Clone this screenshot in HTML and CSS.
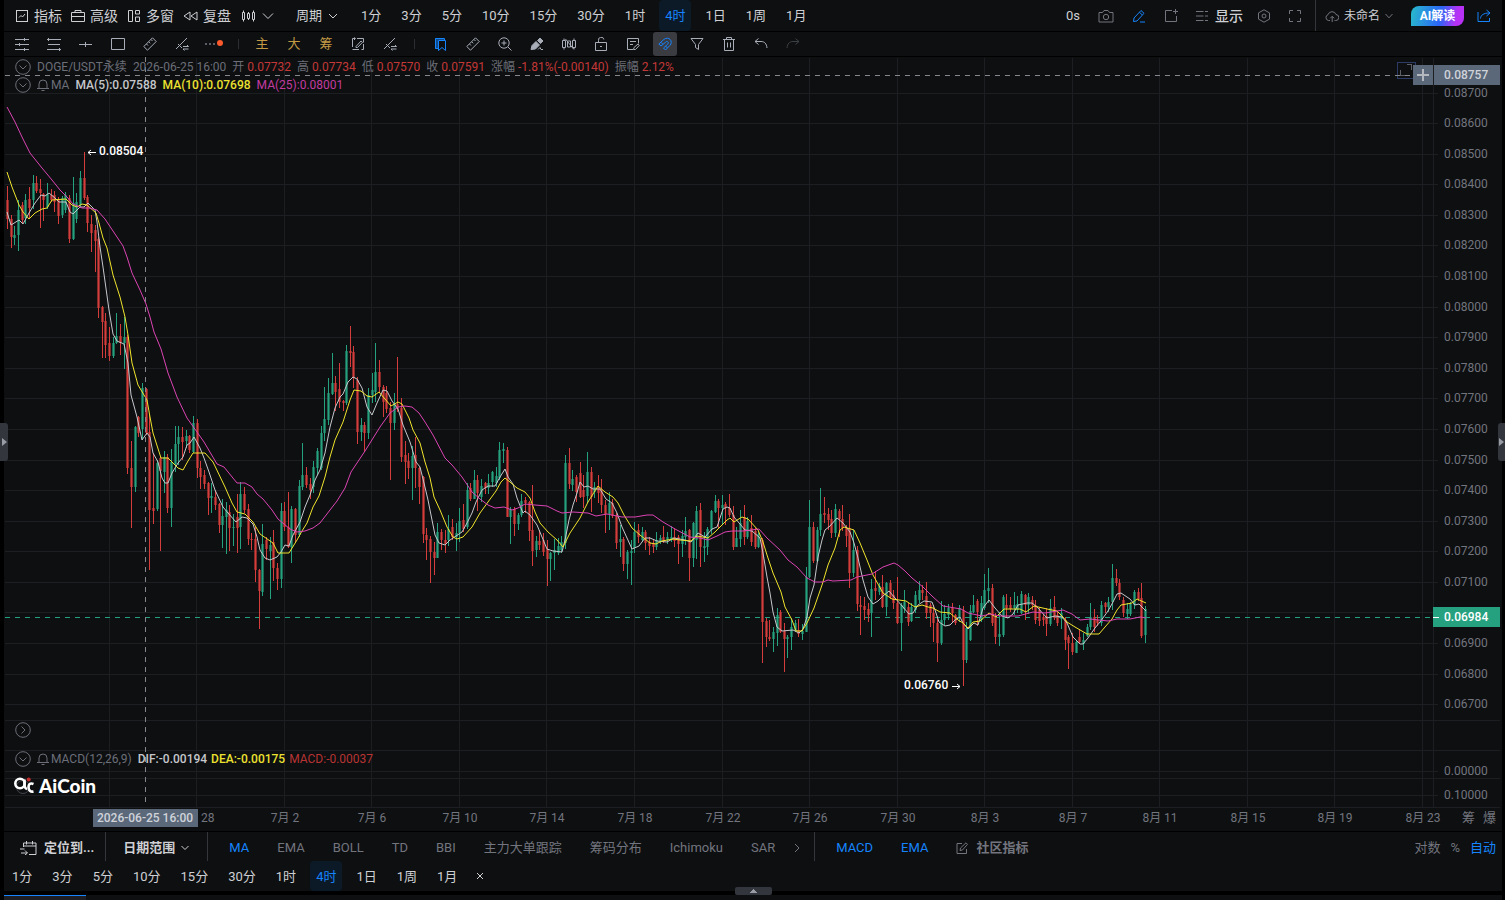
FILE: index.html
```html
<!doctype html>
<html lang="zh-CN">
  <head>
    <meta charset="utf-8">
    <title>DOGE/USDT永续</title>
    <link rel="stylesheet" href="styles.css">
  </head>
  <body>
    <div class="app">
      <header class="topbar">
        <div class="menu">
          <button class="menu-btn"><svg width="14" height="14" viewBox="0 0 14 14"><rect x="1.500" y="1.500" width="11" height="11"/><path d="M4 8.500l2-2 1.500 1.500 2.500-3"/></svg>指标</button>
          <button class="menu-btn"><svg width="14" height="14" viewBox="0 0 14 14"><path d="M.5 3.500h13v9H.5zM4 3.500v-2h6v2M.5 7.500h13"/></svg>高级</button>
          <button class="menu-btn"><svg width="14" height="14" viewBox="0 0 14 14"><path d="M1.500 1.500h4v11h-4zM8.500 1.500h4v3.500h-4zM8.500 8h4v4.500h-4z"/></svg>多窗</button>
          <button class="menu-btn"><svg width="15" height="14" viewBox="0 0 15 14"><path d="M7 3v8L1 7zM14 3v8L8 7z"/></svg>复盘</button>
        </div>
        <button class="menu-btn kind" aria-label="K线类型">
          <svg width="15" height="14" viewBox="0 0 15 14"><path d="M1.500 3.500h2v7h-2zM6.500 4.500h2v5h-2zM11.500 3.500h2v7h-2zM2.500 1.500v2M2.500 10.500v2M7.500 3v1.500M7.500 9.500V11M12.500 1.500v2M12.500 10.500v2"/></svg>
          <svg width="12" height="8" viewBox="0 0 12 8"><path d="M1 1.500l5 5 5-5"/></svg>
        </button>
        <button class="menu-btn period">周期<svg width="10" height="6" viewBox="0 0 10 6"><path d="M1 1l4 4 4-4"/></svg></button>
        <nav class="frames">
          <button>1分</button><button>3分</button><button>5分</button><button>10分</button><button>15分</button><button>30分</button><button>1时</button><button class="on">4时</button><button>1日</button><button>1周</button><button>1月</button>
        </nav>
        <div class="actions">
          <span class="timer">0s</span>
          <button aria-label="截图"><svg class="dim" width="16" height="14" viewBox="0 0 16 14"><path d="M1 3.500h3.500L6 1.500h4l1.500 2H15v9.500H1z"/><circle cx="8" cy="8" r="2.700"/></svg></button>
          <button aria-label="画图"><svg class="blue" width="14" height="14" viewBox="0 0 14 14"><path d="M1.500 12.500l.5-3.500 7-7.500L12 4.300 5 12zM7.500 3.200l2.800 2.800M8 13h5"/></svg></button>
          <button aria-label="新建"><svg class="dim" width="14" height="14" viewBox="0 0 14 14"><path d="M8 1.500H1.500v11h11V7M11.500 0v5M9 2.500h5"/></svg></button>
          <button class="show"><svg class="dim" width="12" height="12" viewBox="0 0 12 12"><path d="M0 1.500h7.500M0 6h7.500M0 10.500h7.500M9 1.500h3M9 6h3M9 10.500h3"/></svg>显示</button>
          <button aria-label="设置"><svg class="dim" width="14" height="14" viewBox="0 0 14 14"><path d="M7 .8l5.500 3.100v6.200L7 13.200l-5.500-3.100V3.900z"/><circle cx="7" cy="7" r="2"/></svg></button>
          <button aria-label="全屏"><svg class="dim" width="12" height="12" viewBox="0 0 12 12"><path d="M.5 4V.5H4M8 .5h3.500V4M11.500 8v3.500H8M4 11.500H.5V8"/></svg></button>
          <button class="layout"><svg class="dim" width="14" height="12" viewBox="0 0 14 12"><path d="M5 10.500H3.500a3 3 0 0 1-.5-5.800 4.200 4.200 0 0 1 8-.2 3 3 0 0 1-.5 6H9.500M7.200 12V6.500M5.200 8.300l2-2 2 2"/></svg>未命名<svg class="dim" width="8" height="6" viewBox="0 0 8 6"><path d="M.5 1L4 4.800 7.500 1"/></svg></button>
          <button class="ai">AI解读</button>
          <button aria-label="分享"><svg class="blue" width="14" height="13" viewBox="0 0 14 13"><path d="M1 3v9.500h11.500V9M3.500 9.500c.3-3.500 3-5.500 9-5.500M9.500 1L13 4 9.500 7"/></svg></button>
        </div>
      </header>

      <div class="tools">
        <div class="tool-group">
          <button aria-label="线段"><svg width="14" height="14" viewBox="0 0 14 14"><path d="M0 2.500h14M0 7.500h14M0 12.500h14M9.500 1v3M4.500 6v3M9.500 11v3"/></svg></button>
          <button aria-label="平行线"><svg width="14" height="14" viewBox="0 0 14 14"><path d="M0 2.500h14M1 7.500h12M0 12.500h14M1.500 1v3M12.500 11v3"/></svg></button>
          <button aria-label="水平线"><svg width="14" height="14" viewBox="0 0 14 14"><path d="M0 7.500h13M6.500 5v5"/></svg></button>
          <button aria-label="矩形"><svg width="14" height="14" viewBox="0 0 14 14"><path d="M.5 1.500h13v11H.5z"/></svg></button>
          <button aria-label="尺子"><svg width="14" height="14" viewBox="0 0 14 14"><path d="M.8 9.500L9.500.8l3.700 3.700-8.700 8.700zM3.500 7l1.500 1.500M5.700 4.800l1.500 1.500M8 2.500L9.500 4"/></svg></button>
          <button aria-label="画线"><svg width="14" height="14" viewBox="0 0 14 14"><path d="M1 12L12 1M3 7l4 4M8 9.500h5.500L12 8M13.500 12H8l1.500 1.500"/></svg></button>
          <button aria-label="更多"><svg width="20" height="14" viewBox="0 0 20 14"><path d="M1 7h2M5 7h2M9 7h2"/><circle class="dot" cx="16" cy="6" r="3"/></svg></button>
          <i class="sep"></i>
          <button class="gold">主</button>
          <button class="gold">大</button>
          <button class="gold">筹</button>
          <button aria-label="模板"><svg width="14" height="14" viewBox="0 0 14 14"><path d="M4 1.500H1.500V10M3 .5l1.500 1L3 3M6 1.500h6.500v4M12.500 7v5.500h-2M1.500 12.500H8M5 9.500L10 4l1.500 1.300-5 5.200H5z"/></svg></button>
          <button aria-label="交易画线"><svg width="14" height="14" viewBox="0 0 14 14"><path d="M1 12L12 1M3 7l4 4M8 9.500h5.500L12 8M13.500 12H8l1.500 1.500"/></svg></button>
          <i class="sep"></i>
        </div>
        <div class="tool-group">
          <button aria-label="书签"><svg class="blue" width="14" height="14" viewBox="0 0 14 14"><path class="shade" d="M1 1h9v2H4v9H1z"/><path d="M4.500 3.500h7v10l-3.500-3-3.500 3zM10.500 3V1.500h-9v10h3"/></svg></button>
          <button aria-label="测量"><svg width="14" height="14" viewBox="0 0 14 14"><path d="M.8 9.500L9.500.8l3.700 3.700-8.700 8.700zM3.500 7l1.500 1.500M5.700 4.800l1.500 1.500M8 2.500L9.500 4"/></svg></button>
          <button aria-label="放大"><svg width="14" height="14" viewBox="0 0 14 14"><circle cx="6" cy="6" r="5.200"/><path d="M10 10l3.500 3.500M3.500 6h5M6 3.500v5"/></svg></button>
          <button aria-label="画笔"><svg width="14" height="14" viewBox="0 0 14 14"><path class="solid" d="M1 12.500l1-4 4-4 3.500 3.500-4 4zM7.500 3.500L10 1l3 3-2.500 2.500z"/><path d="M8 12.500l2-2 1 2h2"/></svg></button>
          <button aria-label="隐藏K线"><svg width="14" height="14" viewBox="0 0 14 14"><path d="M.5 3.500h3v7h-3zM10.500 3.500h3v7h-3zM2 1.500v2M2 10.500v2M12 1.500v2M12 10.500v2M5.500 4v6h3V4zM3.500 2l8 10"/></svg></button>
          <button aria-label="解锁"><svg width="14" height="14" viewBox="0 0 14 14"><path d="M1.500 5.500h11v8h-11zM4.500 5.500V3.500a2.700 2.700 0 0 1 5.400-1M6 9.500h2"/></svg></button>
          <button aria-label="备注"><svg width="14" height="14" viewBox="0 0 14 14"><path d="M7 12.500H1.500v-11h11v5M4 4.500h6M4 7.500h3M7.500 12.500l.5-2 4-3.500 1.200 1.500-3.700 4z"/></svg></button>
          <button class="on" aria-label="磁铁"><svg class="blue" width="14" height="14" viewBox="0 0 14 14"><path d="M.8 7l5-4.500c5-4 10 2 6 6L7.500 13 5.500 11l4.300-4c1.500-1.500-.5-3.500-2-2L3 9zM2.800 5.200l2 2M7.500 9l2 2"/></svg></button>
          <button aria-label="筛选"><svg width="14" height="14" viewBox="0 0 14 14"><path d="M1 1.500h12L8.500 7.500v5l-3-2v-3z"/></svg></button>
          <button aria-label="删除"><svg width="14" height="14" viewBox="0 0 14 14"><path d="M1 2.500h12M4.500 2.500v-2h5v2M2.500 2.500v11h9v-11M5.500 5.500v5M8.500 5.500v5"/></svg></button>
          <button aria-label="撤销"><svg width="14" height="14" viewBox="0 0 14 14"><path d="M4.500 1.500l-3.500 3 3.500 3M1 4.500h6c3.500 0 5.500 2 6 6.500"/></svg></button>
          <button class="off" aria-label="重做"><svg width="14" height="14" viewBox="0 0 14 14"><path d="M9.500 1.500l3.500 3-3.500 3M13 4.500H7c-3.500 0-5.500 2-6 6.500"/></svg></button>
        </div>
      </div>

      <main class="chart">
        <svg id="plot" class="plot"></svg>
        <div class="legend legend-top">
          <div class="line">
            <svg class="fold" width="16" height="16" viewBox="0 0 16 16"><circle cx="8" cy="8" r="7.300"/><path d="M4.500 6.500L8 10l3.500-3.500"/></svg>
            <span class="pair">DOGE/USDT永续</span>
            <span class="pair">2026-06-25 16:00</span>
            <span class="pair">开<b>0.07732</b></span>
            <span class="pair">高<b>0.07734</b></span>
            <span class="pair">低<b>0.07570</b></span>
            <span class="pair">收<b>0.07591</b></span>
            <span class="pair">涨幅<b>-1.81%(-0.00140)</b></span>
            <span class="pair">振幅<b>2.12%</b></span>
          </div>
          <div class="line">
            <svg class="fold" width="16" height="16" viewBox="0 0 16 16"><circle cx="8" cy="8" r="7.300"/><path d="M4.500 6.500L8 10l3.500-3.500"/></svg>
            <span class="name"><svg width="12" height="12" viewBox="0 0 12 12"><path d="M0 9.500h12M2 9.500V5a4 4 0 0 1 8 0v4.500M4.500 11.500h3"/></svg>MA</span>
            <span class="white">MA(5):0.07588</span>
            <span class="yellow">MA(10):0.07698</span>
            <span class="pink">MA(25):0.08001</span>
          </div>
        </div>
        <div class="legend legend-macd">
          <div class="line">
            <svg class="fold" width="16" height="16" viewBox="0 0 16 16"><circle cx="8" cy="8" r="7.300"/><path d="M6.500 4.500L10 8l-3.500 3.500"/></svg>
          </div>
          <div class="line">
            <svg class="fold" width="16" height="16" viewBox="0 0 16 16"><circle cx="8" cy="8" r="7.300"/><path d="M4.500 6.500L8 10l3.500-3.500"/></svg>
            <span class="name"><svg width="12" height="12" viewBox="0 0 12 12"><path d="M0 9.500h12M2 9.500V5a4 4 0 0 1 8 0v4.500M4.500 11.500h3"/></svg>MACD(12,26,9)</span>
            <span class="values">
              <span class="white">DIF:-0.00194</span>
              <span class="yellow">DEA:-0.00175</span>
              <span class="red">MACD:-0.00037</span>
            </span>
          </div>
          <div class="brand">
            <svg width="20" height="18" viewBox="0 0 20 18"><circle class="ring" cx="9" cy="10" r="6.500"/><path class="thick" d="M10.500 2.500v4.500q0 4.500 2.500 5"/><circle class="thick" cx="6" cy="6.500" r="4.700"/><path class="thick" d="M19.500 7c-3.500-1.500-5 .5-5 3.200 0 3 2 5 5 4.300"/><circle class="spot" cx="14.700" cy="2.500" r="2"/></svg>
            AiCoin
          </div>
        </div>
        <div class="extra"><button>筹</button><button>爆</button></div>
      </main>

      <div class="indicators">
        <button class="strong locate"><svg width="17" height="14" viewBox="0 0 17 14"><path d="M3.500 6V2h12.500v11.500H9M3.500 5h12.500M6.500 0v3.500M12.500 0v3.500M0 8h4.500M1 12h6M5 9.500L7.500 12 5 14"/></svg>定位到...</button>
        <button class="strong range">日期范围<svg width="8" height="6" viewBox="0 0 8 6"><path d="M.5 1L4 4.500 7.500 1"/></svg></button>
        <div class="tabs">
          <button class="on">MA</button><button>EMA</button><button>BOLL</button><button>TD</button><button>BBI</button><button>主力大单跟踪</button><button>筹码分布</button><button>Ichimoku</button><button>SAR</button>
        </div>
        <button class="next" aria-label="更多指标"><svg width="6" height="10" viewBox="0 0 6 10"><path d="M1 1l4 4-4 4"/></svg></button>
        <div class="tabs sub">
          <button class="on">MACD</button><button class="on">EMA</button>
          <button class="community"><svg width="12" height="12" viewBox="0 0 12 12"><path d="M6 1.500H1v10h9.500V7M4 8.500l.5-2.500L10 .8 11.500 2.300 6.500 8z"/></svg>社区指标</button>
        </div>
        <div class="scale"><button>对数</button><button>%</button><button class="on">自动</button></div>
      </div>
      <div class="bottom">
        <nav class="frames">
          <button>1分</button><button>3分</button><button>5分</button><button>10分</button><button>15分</button><button>30分</button><button>1时</button><button class="on">4时</button><button>1日</button><button>1周</button><button>1月</button>
        </nav>
        <button class="close" aria-label="关闭"><svg width="8" height="8" viewBox="0 0 8 8"><path d="M1 1l6 6M7 1L1 7"/></svg></button>
      </div>
      <footer class="dock"><div class="dock-tab"></div></footer>
    </div>
    <button class="handle left" aria-label="展开左侧"><svg width="5" height="8" viewBox="0 0 5 8"><path d="M0 0l5 4-5 4z"/></svg></button>
    <button class="handle right" aria-label="收起右侧"><svg width="5" height="8" viewBox="0 0 5 8"><path d="M0 0l5 4-5 4z"/></svg></button>
    <button class="handle down" aria-label="展开底部"><svg width="8" height="4" viewBox="0 0 8 4"><path d="M0 4l4-4 4 4z"/></svg></button>
    <script src="chart.js"></script>
  </body>
</html>
```
FILE: styles.css
```css
* { box-sizing: border-box; }
html, body { height: 100%; }
body {
  margin: 0;
  background: #000;
  color: #cfd0d4;
  font: 13px/18px Roboto, "Noto Sans CJK SC", sans-serif;
  overflow: hidden;
}
button {
  display: flex;
  align-items: center;
  justify-content: center;
  padding: 0;
  border: 0;
  background: none;
  color: inherit;
  font: inherit;
  white-space: nowrap;
  cursor: pointer;
}
svg { display: block; flex: none; fill: none; stroke: currentColor; }
svg.dim { color: #73757e; }
svg.blue { color: #1684fc; }

.app {
  display: flex;
  flex-direction: column;
  min-height: 100%;
  margin: 0 3px 0 4px;
}
.topbar, .tools, .chart, .indicators, .bottom { background: #0d0f11; }

/* top bar */
.topbar {
  display: flex;
  align-items: center;
  height: 31px;
  padding: 0 11px;
  margin-bottom: 1px;
}
.menu { display: flex; gap: 9px; font-size: 14px; }
.menu-btn { gap: 5px; }
.kind { margin-left: 10px; gap: 6px; }
.period { margin-left: 22px; gap: 6px; }
.frames { display: flex; align-self: stretch; gap: 8px; }
.frames button { padding: 0 6px; border-radius: 4px; }
.frames .on { background: #0c1a27; color: #1684fc; }
.topbar .frames { margin-left: 17px; }
.actions {
  display: flex;
  align-items: center;
  align-self: stretch;
  gap: 18px;
  margin-left: auto;
}
.show { gap: 7px; font-size: 14px; font-weight: 500; margin-right: -4px; }
.layout {
  align-self: stretch;
  gap: 5px;
  padding-left: 9px;
  margin-left: -4px;
  border-left: 1px solid #34363c;
  font-size: 12px;
}
.ai {
  width: 53px;
  height: 20px;
  margin-right: -5px;
  border-radius: 8px 0;
  background: linear-gradient(100deg, #28bccb, #2b66f6 55%, #b832f5 85%);
  color: #fff;
  font-size: 12px;
  font-weight: 700;
}

/* drawing tools */
.tools {
  display: flex;
  gap: 11px;
  height: 24px;
  padding: 0 6px;
  margin-bottom: 1px;
}
.tool-group { display: flex; gap: 8px; color: #a9adb8; }
.tool-group button { width: 24px; border-radius: 3px; }
.tool-group .on { background: #3a3c42; }
.tool-group .off { opacity: .3; }
.tool-group .gold { color: #c49a45; }
.tool-group .sep {
  align-self: center;
  width: 8px;
  height: 10px;
  background: linear-gradient(#2b2d32, #2b2d32) center / 1px 100% no-repeat;
}
.dot { fill: #fa5a2d; stroke: none; }
.shade { fill: #0c4b8c; stroke: none; }
.solid { fill: currentColor; }

/* chart */
.chart { position: relative; flex: 1; margin-bottom: 1px; }
.plot { width: 100%; height: 774px; font-size: 12px; }
.plot text { fill: #73757e; stroke: none; }
.plot .tag-text { fill: #cfd3d9; font-weight: 500; }
.plot .bright { fill: #fff; font-weight: 500; }
.plot rect { stroke: none; }
.grid { stroke: #1c1e21; shape-rendering: crispEdges; }
.up { fill: #26a17f; shape-rendering: crispEdges; }
.down { fill: #d43d3b; shape-rendering: crispEdges; }
.body { opacity: .6; }
.ma5 { stroke: #c6c7cc; }
.ma10 { stroke: #f0e42c; }
.ma25 { stroke: #dc44b3; }
.cross { stroke: #85878d; stroke-dasharray: 5 5; shape-rendering: crispEdges; }
.last { stroke: #26a17f; stroke-dasharray: 5 5; shape-rendering: crispEdges; }
.tag { fill: #5b687a; }
.last-tag { fill: #26a17f; }
.frame { stroke: #2c3a66; shape-rendering: crispEdges; }
.corner { stroke: #5d5f67; shape-rendering: crispEdges; }
.plus { stroke: #b4b8be; stroke-width: 2; shape-rendering: crispEdges; }
.arrow { stroke: #fff; }

.legend {
  position: absolute;
  left: 11px;
  display: flex;
  flex-direction: column;
  color: #6c6e78;
  font-size: 12px;
}
.legend-top { top: 1px; }
.legend-macd { top: 664px; gap: 11px; }
.line { display: flex; align-items: center; gap: 6px; height: 18px; }
.pair { display: flex; gap: 3px; }
.pair b { color: #c43837; font-weight: 400; }
.name { display: flex; align-items: center; gap: 2px; }
.values { display: flex; gap: 4px; }
.white { color: #c6c7cb; font-weight: 500; }
.yellow { color: #ece12f; font-weight: 500; }
.pink { color: #c23ca0; }
.red { color: #b83433; }
.brand {
  display: flex;
  align-items: center;
  gap: 5px;
  height: 18px;
  margin-top: -2px;
  margin-left: -1px;
  color: #fff;
  font: 900 19px/18px Lato, sans-serif;
}
.ring { stroke: #44464d; }
.thick { stroke-width: 2.6; }
.spot { fill: #c22d2d; stroke: none; }
.extra {
  position: absolute;
  right: 6px;
  bottom: 4px;
  display: flex;
  gap: 8px;
  color: #73757e;
}

/* indicator row */
.indicators {
  display: flex;
  align-items: stretch;
  height: 29px;
  padding-right: 6px;
  color: #73757e;
}
.indicators button { padding-top: 2px; }
.indicators .strong { color: #cfd0d4; font-weight: 700; }
.indicators .locate { gap: 7px; padding: 2px 11px 0 16px; border-right: 1px solid #34363c; }
.indicators .range { gap: 6px; padding: 2px 18px 0 17px; border-right: 1px solid #34363c; }
.tabs { display: flex; gap: 28px; padding-left: 21px; }
.indicators .on { color: #1684fc; }
.indicators .next { padding: 2px 14px 0 19px; border-right: 1px solid #34363c; }
.indicators .community { gap: 8px; font-weight: 700; }
.scale { display: flex; gap: 10px; margin-left: auto; }

.bottom { display: flex; align-items: center; height: 30px; padding-left: 2px; }
.bottom .frames button { padding-top: 1px; }
.close { margin-left: 13px; }

.dock { height: 5px; margin-top: 4px; background: #0d0f11; }
.dock-tab { width: 82px; height: 5px; border-top: 1px solid #1684fc; background: #1c1e24; }

.handle { position: absolute; background: #34363e; color: #9a9ca5; }
.handle svg { fill: currentColor; stroke: none; }
.handle.left { left: 0; top: 423px; width: 8px; height: 38px; border-radius: 0 3px 3px 0; }
.handle.right { right: 0; top: 423px; width: 7px; height: 38px; border-radius: 3px 0 0 3px; }
.handle.down { left: calc(50% - 18px); bottom: 5px; width: 37px; height: 8px; border-radius: 2px; }
```
FILE: chart.js
```js
// one candle: direction, high, body top, body bottom, low
const CANDLES = `
r186,200,219,229 r215,219,237,248 g226,235,238,245 g200,210,235,251 r202,205,220,224 g194,200,218,224
r187,199,208,218 g175,183,200,209 r176,183,191,193 r179,189,193,228 r193,194,200,221 g183,194,207,209
r189,195,200,202 r191,195,202,212 r197,199,216,224 g196,198,215,218 g192,195,210,213 r195,198,239,243
g177,203,239,240 g193,202,219,223 g171,178,205,207 r152,178,198,200 r195,197,223,232 r215,224,233,252
r225,230,241,272 r237,239,308,318 r306,307,322,358 r313,321,345,358 r327,343,356,361 g337,343,356,358
g313,336,343,344 r324,336,343,355 g317,337,343,369 r335,337,468,474 r441,468,487,528 g426,427,487,492
r416,417,433,437 g383,388,429,440 r388,389,433,435 r415,432,510,570 r453,508,511,524 g460,463,509,511
r457,458,471,551 g451,457,472,493 r454,457,508,513 g449,462,508,527 g426,444,464,472 g426,437,444,465
r427,437,442,460 g430,436,441,448 r435,436,450,453 g416,423,452,453 r419,423,468,478 r461,468,477,489
r470,475,484,489 r482,483,498,515 g483,496,498,513 r490,497,505,510 r503,504,525,533 g499,516,525,548
g502,510,517,554 r505,512,528,551 g514,527,528,546 r494,517,528,553 g482,494,527,549 r487,494,510,513
r504,509,539,545 r533,539,540,550 r527,539,570,582 r569,570,591,629 g524,544,592,596 r537,540,549,560
g537,545,551,599 r530,542,568,581 r563,568,579,590 g503,511,579,588 r502,511,527,531 r492,527,547,548
g506,509,547,563 r508,509,535,542 g480,486,535,537 g443,475,487,490 r467,475,485,488 r478,484,490,499
g461,467,487,493 g448,451,468,475 g426,433,468,470 g387,419,433,441 g378,393,420,425 g353,383,394,395
r376,383,392,411 r363,389,402,408 r400,401,403,411 g345,351,403,405 r326,351,353,367 r346,352,378,388
r377,380,432,444 g418,425,432,441 r422,425,433,452 g388,395,433,439 g373,390,395,403 g343,372,392,402
r360,372,387,392 r385,387,402,417 r386,393,409,413 r402,408,423,480 g393,404,423,430 r357,404,409,412
r398,408,457,462 r441,455,462,484 r453,461,468,479 g446,456,468,500 r437,455,468,488 r467,468,487,504
r476,477,534,543 r528,535,540,560 r536,539,552,583 r542,552,558,575 g523,532,558,558 r529,532,540,550
r530,540,544,553 g515,529,540,546 r519,527,537,540 g523,533,537,551 g508,521,533,542 r504,520,529,532
g483,490,527,529 r483,488,499,501 g470,480,499,499 r475,480,493,511 g479,486,497,502 r482,483,488,494
g474,483,488,494 g471,472,482,487 g467,476,483,487 g442,450,478,480 g443,449,451,463 r447,450,517,517
g507,509,517,544 r507,509,524,536 g513,515,524,530 g494,501,515,517 r497,500,503,513 r501,502,531,541
r485,530,551,566 g536,541,550,557 r530,541,545,550 r533,540,552,556 r540,549,559,586 g552,553,559,581
g539,550,553,570 g538,546,553,555 g536,542,550,553 g455,463,543,549 r448,463,484,489 g470,479,485,491
r475,477,492,502 r462,473,497,498 r475,490,497,508 g452,472,496,503 r467,472,497,512 g482,487,492,498
r475,487,493,503 r479,490,505,513 r500,505,514,533 g492,503,514,530 r499,503,516,518 r513,516,543,549
g525,539,542,557 r537,539,564,571 g550,552,564,579 g540,551,553,585 g522,532,548,553 r524,530,537,543
g527,532,540,542 r530,532,543,550 r537,542,546,555 r539,543,547,553 g532,540,547,550 g535,538,542,544
r526,537,541,543 g532,537,540,544 g526,537,540,542 r528,537,541,547 r535,537,544,564 g530,536,544,557
g517,531,537,545 r529,530,558,581 g522,523,558,567 g506,511,540,559 r503,510,547,567 g532,546,548,562
g527,529,547,555 g510,511,530,534 g495,501,512,513 r499,501,508,528 g495,505,508,525 r502,504,508,525
r494,508,515,517 r506,515,547,550 g527,538,547,547 g510,523,539,547 r505,517,537,545 g517,521,537,539
r515,528,542,546 r528,531,547,549 g532,534,547,548 r538,540,622,663 r618,621,637,647 r620,637,639,641
g627,632,639,652 g608,615,633,646 r610,612,632,633 r623,631,639,672 g635,637,639,658 g618,627,637,650
g620,623,631,632 r619,630,634,637 g624,631,634,640 g567,577,632,632 g500,527,577,578 r522,527,561,563
g527,530,561,562 g488,514,530,536 r497,513,515,523 r508,514,520,530 r510,519,533,538 g504,509,533,537
r509,511,519,537 r505,519,528,531 r525,528,536,547 r514,528,573,588 g530,550,573,577 r546,550,604,611
r596,605,607,635 r597,606,610,620 r603,609,615,622 g579,589,613,637 r571,588,591,600 g583,586,592,595
r575,587,607,608 g582,583,607,616 r580,583,597,599 r590,595,603,609 r577,603,623,624 g603,605,623,651
g590,602,609,613 r603,607,622,626 g603,607,621,622 g591,595,610,613 g581,590,600,603 r585,590,593,600
r582,596,613,619 r603,605,613,627 r605,613,623,642 r616,623,643,662 g601,620,643,645 g605,614,620,625
g604,608,615,620 r603,608,613,622 r614,615,623,625 g605,608,618,622 r606,610,660,686 g622,628,660,663
g605,611,640,641 g595,605,612,613 r599,601,612,626 g596,603,620,622 g574,590,608,610 g568,588,591,603
r584,588,623,626 r613,617,637,644 g612,634,637,646 g595,597,635,637 r594,605,608,617 r597,605,609,612
g592,605,608,615 g596,604,610,613 g591,594,613,614 r594,595,605,620 g593,597,605,614 r596,600,605,610
r600,605,620,624 r607,610,621,626 r614,617,620,626 r608,616,624,636 g599,608,624,626 r596,607,618,620
r612,615,623,626 g608,613,619,629 r617,620,640,650 r635,637,643,669 r633,643,652,655 g640,642,653,653
r629,637,642,643 g633,640,644,650 g624,627,636,637 g603,617,627,630 r609,617,627,632 r615,620,623,626
g601,605,623,626 r602,603,607,613 g597,602,607,612 g564,578,602,610 r569,578,583,586 r579,583,597,600
r597,600,613,617 g603,609,614,619 g602,604,614,616 g590,592,605,609 r588,592,599,601 r583,598,636,638
g606,609,635,643`;

const MA5 = `7,212 11,225 19,220 23,224 29,213 35,203 41,195 45,196 49,193 55,198 59,202 66,202 70,212 73,214 80,207
84,207 88,203 95,210 97,222 100,247 103,267 109,310 113,334 117,341 124,344 128,363 131,395 137,417 142,440 147,433
150,437 153,453 158,462 162,478 165,483 168,483 172,473 178,463 183,457 187,445 190,443 194,437 200,448 204,458
209,472 215,490 223,507 228,513 236,522 242,517 247,518 253,524 257,537 260,550 265,558 270,560 277,557 281,552
285,545 289,546 293,535 300,522 305,507 310,495 315,480 320,470 325,453 330,427 335,408 340,397 343,394 348,382
353,377 357,379 362,388 367,407 372,415 377,403 383,390 387,391 392,401 398,409 403,425 410,442 416,462 420,467
424,483 428,500 432,520 435,535 439,543 445,545 450,540 456,536 462,532 467,523 472,513 476,502 482,490 488,486
495,486 500,477 505,469 508,477 513,484 517,498 523,513 525,511 530,515 537,525 542,537 547,549 553,551 562,552
565,540 569,520 573,505 577,493 580,482 584,487 588,486 593,489 600,489 606,499 612,503 617,513 622,527 627,538
632,549 639,546 645,538 650,538 657,541 667,542 674,538 685,540 691,542 698,533 705,537 712,529 717,527 720,518
723,509 727,507 730,508 734,517 740,524 745,530 752,531 760,538 763,553 767,577 770,593 773,612 777,627 782,631
793,630 799,633 803,629 807,617 810,598 814,585 818,557 822,540 825,530 830,526 837,518 843,523 850,532 854,543
858,558 863,580 868,597 873,604 878,601 883,596 889,591 895,598 903,607 909,614 913,613 918,605 924,601 932,602
935,610 939,622 945,626 950,625 955,620 960,617 963,623 968,629 974,623 978,625 983,608 989,600 995,608 1002,616
1008,618 1013,614 1018,605 1027,603 1032,603 1037,607 1047,618 1055,616 1062,617 1067,623 1073,637 1080,644
1083,644 1088,638 1095,628 1100,622 1108,611 1113,602 1117,594 1121,593 1127,597 1130,599 1135,605 1139,604 1146,611`;

const MA10 = `7,172 12,187 19,205 23,212 29,219 35,213 42,209 47,208 52,200 66,199 72,205 77,207 82,204 87,205 96,213
99,223 103,238 107,248 113,275 120,297 125,317 128,335 132,363 138,385 147,400 150,417 153,433 161,458 168,458
178,468 183,470 188,461 193,453 205,453 213,462 225,487 232,503 237,512 245,514 253,522 260,534 273,543 278,553
289,553 297,540 302,531 307,523 313,507 319,496 325,477 330,457 335,440 343,422 350,400 354,390 361,391 367,396
372,397 379,392 385,399 391,406 398,402 402,404 409,418 413,430 420,443 425,462 430,478 434,497 440,510 447,527
453,537 457,539 463,537 472,527 480,513 488,502 496,491 501,482 505,478 510,482 517,488 525,492 530,498 535,512
540,523 548,532 557,540 563,547 570,533 580,518 588,502 598,486 605,492 613,497 618,503 624,515 632,528 640,535
650,543 656,544 662,541 673,539 680,540 691,541 697,536 708,538 715,532 727,520 730,518 734,522 742,517 748,519
758,530 763,542 767,555 773,573 781,592 785,607 792,620 796,631 802,631 807,623 814,608 822,585 828,565 835,548
840,530 844,527 854,530 860,543 867,560 873,575 883,593 892,599 906,601 915,607 922,605 928,607 933,608 940,612
950,613 958,620 963,623 968,628 973,622 980,621 989,613 996,617 1004,609 1020,609 1026,612 1034,606 1047,609
1057,611 1063,617 1067,622 1075,627 1087,634 1099,634 1105,627 1112,619 1117,610 1121,605 1132,603 1137,599 1146,603`;

const MA25 = `7,107 15,122 22,137 30,153 42,168 52,180 60,190 67,197 73,204 82,208 89,208 97,210 105,219 117,237
123,246 127,257 132,273 140,290 146,304 150,317 154,332 161,349 168,373 177,397 187,418 197,432 204,442 217,464
224,467 237,483 245,483 252,487 257,494 263,499 272,510 278,519 290,529 297,532 305,531 313,528 320,523 330,510
337,501 345,488 351,472 365,451 380,427 390,413 398,407 405,406 412,407 419,413 425,422 433,435 445,458 452,465
462,477 472,492 480,499 488,505 495,508 504,507 512,510 518,508 525,504 535,505 547,506 557,511 562,513 573,512
588,513 596,516 607,514 622,517 635,517 647,515 653,515 663,522 675,529 690,537 700,538 708,540 717,536 725,532
732,531 743,531 759,529 767,538 780,550 788,560 797,567 807,578 815,582 823,582 828,580 833,581 851,580 857,577
872,574 883,567 894,563 898,565 905,571 912,578 923,587 932,596 943,606 961,609 968,613 982,616 990,614 1000,616
1018,616 1033,612 1045,613 1063,610 1072,614 1080,620 1090,619 1108,621 1117,619 1130,619 1140,617 1146,618`;

const DATES = ["", "6月 28", "7月 2", "7月 6", "7月 10", "7月 14", "7月 18", "7月 22",
  "7月 26", "7月 30", "8月 3", "8月 7", "8月 11", "8月 15", "8月 19", "8月 23"];

const LEFT = 4, TOP = 57;
const STEP = 3.647;
const plot = document.getElementById("plot");

const rect = (cls, x, y, w, h) => `<rect class="${cls}" x="${x}" y="${y}" width="${w}" height="${h}"/>`;
const path = (cls, d) => `<path class="${cls}" d="${d}"/>`;
const text = (cls, x, y, s, anchor = "start") => `<text class="${cls}" x="${x}" y="${y}" text-anchor="${anchor}">${s}</text>`;

function draw() {
  const width = plot.clientWidth;
  const right = LEFT + width - 2;
  const axis = right - 67;
  let out = "";

  plot.setAttribute("viewBox", `${LEFT} ${TOP} ${width} 774`);

  // grid and axes
  let grid = `M${axis + .5} 58V807`;
  DATES.forEach((d, i) => {
    const x = Math.floor(109.3 + i * 87.53);
    if (x > axis) return;
    grid += `M${x + .5} 58V807`;
    if (d) out += text("", x + 1, 822, d, "middle");
  });
  for (let i = 0; i <= 20; i++) {
    const y = Math.floor(93.1 + i * 30.575);
    grid += `M5 ${y + .5}H${axis + 5}`;
    // 0.07000 sits under the last price tag
    if (i != 17) out += text("", axis + 11, y + 4, (0.087 - i * 0.001).toFixed(5));
  }
  [["0.00000", 771], ["0.10000", 795]].forEach(([s, y]) => {
    grid += `M5 ${y + .5}H${axis + 5}`;
    out += text("", axis + 11, y + 4, s);
  });
  [720, 750, 778, 807].forEach(y => { grid += `M5 ${y + .5}H${right}`; });
  out = path("grid", grid) + out;

  // last price
  out += path("last", `M5 617.5H${axis}`);

  // candles
  CANDLES.trim().split(/\s+/).forEach((c, i) => {
    const [hi, a, b, lo] = c.slice(1).split(",").map(Number);
    const cls = c[0] == "g" ? "up" : "down";
    const x = Math.round(7 + i * STEP);
    out += rect(cls + " body", x - 1, a, 3, Math.max(b - a, 1));
    out += rect(cls, x, hi, 1, lo - hi);
  });

  out += `<polyline class="ma5" points="${MA5}"/>`;
  out += `<polyline class="ma10" points="${MA10}"/>`;
  out += `<polyline class="ma25" points="${MA25}"/>`;

  // high and low marks
  out += text("bright", 99, 155, "0.08504") + path("arrow", "M96 152.500H88M91 150l-3 2.500 3 2.500");
  out += text("bright", 904, 689, "0.06760") + path("arrow", "M952 686.500h8M957 684l3 2.500-3 2.500");

  // crosshair
  out += path("frame", `M${axis - 36 + .5} 62.500h18v16h-18z`);
  out += path("corner", `M${axis - 26} 64.500h4.500v5M${axis - 32.5} 70v5.500h9`);
  out += path("cross", `M5 75.500H${axis - 20}M145.500 57V803`);
  out += rect("tag", axis - 20, 65, 20, 20) + path("plus", `M${axis - 16} 75h12M${axis - 10} 69v12`);
  out += rect("tag", axis + 1, 65, 66, 20) + text("tag-text", axis + 11, 79, "0.08757");
  out += rect("tag", 93, 809, 105, 18) + text("tag-text", 145, 822, "2026-06-25 16:00", "middle");
  out += rect("last-tag", axis, 607, 67, 20) + text("bright", axis + 11, 621, "0.06984");
  out += path("arrow", `M${axis} 617.500h6`);

  plot.innerHTML = out;
}

draw();
window.addEventListener("resize", draw);
```
